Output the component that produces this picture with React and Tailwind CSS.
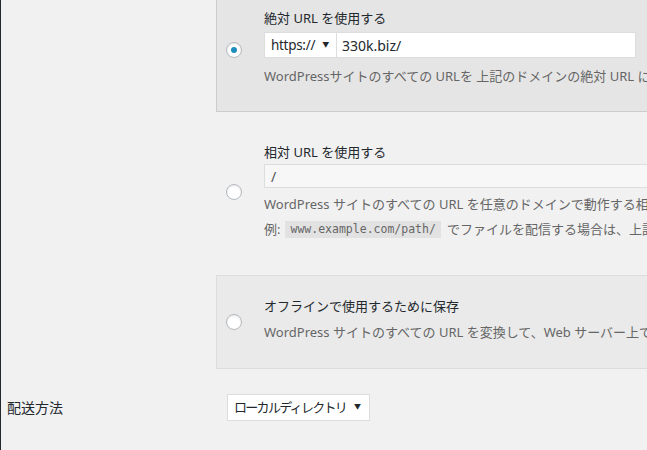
import React from "react";

const FONT = { fontFamily: '"Noto Sans", "Noto Sans CJK JP", sans-serif' };

function Radio({ checked }) {
  return (
    <span className="flex h-4 w-4 items-center justify-center rounded-full border border-[#b4b9be] bg-white shadow-[inset_0_1px_2px_rgba(0,0,0,0.1)]">
      {checked && <span className="h-[6px] w-[6px] rounded-full bg-[#1e8cbe]" />}
    </span>
  );
}

export default function App() {
  return (
    <div
      className="h-[450px] w-[647px] overflow-hidden border-l border-[#23282d] bg-[#f1f1f1] text-[#23282d]"
      style={FONT}
    >
      <div className="ml-[215px] w-[640px]">
        {/* 絶対 URL */}
        <div className="-mt-[15px] flex h-[127px] border border-[#cccccc] bg-[#e5e5e5]">
          <div className="flex w-[47px] shrink-0 items-center pl-[9px] pt-[3px]">
            <Radio checked />
          </div>
          <div className="flex flex-col pt-[22px]">
            <div className="h-5 text-[13px] leading-5">絶対 URL を使用する</div>
            <div className="mt-1 flex h-[26px]">
              <div className="flex w-[73px] items-center justify-between whitespace-nowrap border border-[#dddddd] bg-white pl-[6px] pr-[7px] text-[13.5px] tracking-[-0.3px]">
                <span>https://</span>
                <span className="text-[7px]">▼</span>
              </div>
              <div className="flex w-[299px] items-center border border-l-0 border-[#dddddd] bg-white pl-[5px] text-[14px]">
                330k.biz/
              </div>
            </div>
            <div className="mt-2 h-5 whitespace-nowrap text-[13px] leading-5 text-[#666666]">
              WordPressサイトのすべての URLを 上記のドメインの絶対 URL に変換します。
            </div>
          </div>
        </div>

        {/* 相対 URL */}
        <div className="mt-[30px] flex">
          <div className="flex w-[48px] shrink-0 items-center pl-[10px] pt-[2px]">
            <Radio />
          </div>
          <div className="flex flex-col">
            <div className="h-5 text-[13px] leading-5">相対 URL を使用する</div>
            <div className="mt-[2px] flex h-6 w-[400px] items-center border border-[#dddddd] bg-[#f7f7f7] pl-[6px] text-[14px] text-[#555555]">
              /
            </div>
            <div className="mt-[6px] h-5 whitespace-nowrap text-[13px] leading-5 text-[#666666]">
              WordPress サイトのすべての URL を任意のドメインで動作する相対 URL に変換します。
            </div>
            <div className="mt-[5px] flex h-5 items-center whitespace-nowrap text-[13px] leading-5 text-[#666666]">
              <span>例:</span>
              <code
                className="ml-[5px] mr-[6px] bg-[#e2e2e2] px-[5px] py-[1px] text-[11.5px] leading-[15px]"
                style={{ fontFamily: '"DejaVu Sans Mono", monospace' }}
              >
                www.example.com/path/
              </code>
              <span>でファイルを配信する場合は、上記の</span>
            </div>
          </div>
        </div>

        {/* オフライン */}
        <div className="mt-[36px] flex h-[94px] border border-[#dddddd] bg-[#eaeaea]">
          <div className="flex w-[47px] shrink-0 items-center pl-[9px]">
            <Radio />
          </div>
          <div className="flex flex-col pt-[20px]">
            <div className="h-5 text-[13px] leading-5">オフラインで使用するために保存</div>
            <div className="mt-[6px] h-5 whitespace-nowrap text-[13px] leading-5 text-[#666666]">
              WordPress サイトのすべての URL を変換して、Web サーバー上で使用します。
            </div>
          </div>
        </div>
      </div>

      {/* 配送方法 */}
      <div className="mt-[25px] flex items-center">
        <div className="w-[226px] pl-[6px] text-[14px]">配送方法</div>
        <div className="flex h-[27px] w-[143px] items-center justify-between whitespace-nowrap border border-[#dddddd] bg-white pl-[6px] pr-[8px] text-[13px] tracking-[-1.7px]">
          <span>ローカルディレクトリ</span>
          <span className="text-[7px] tracking-normal">▼</span>
        </div>
      </div>
    </div>
  );
}
